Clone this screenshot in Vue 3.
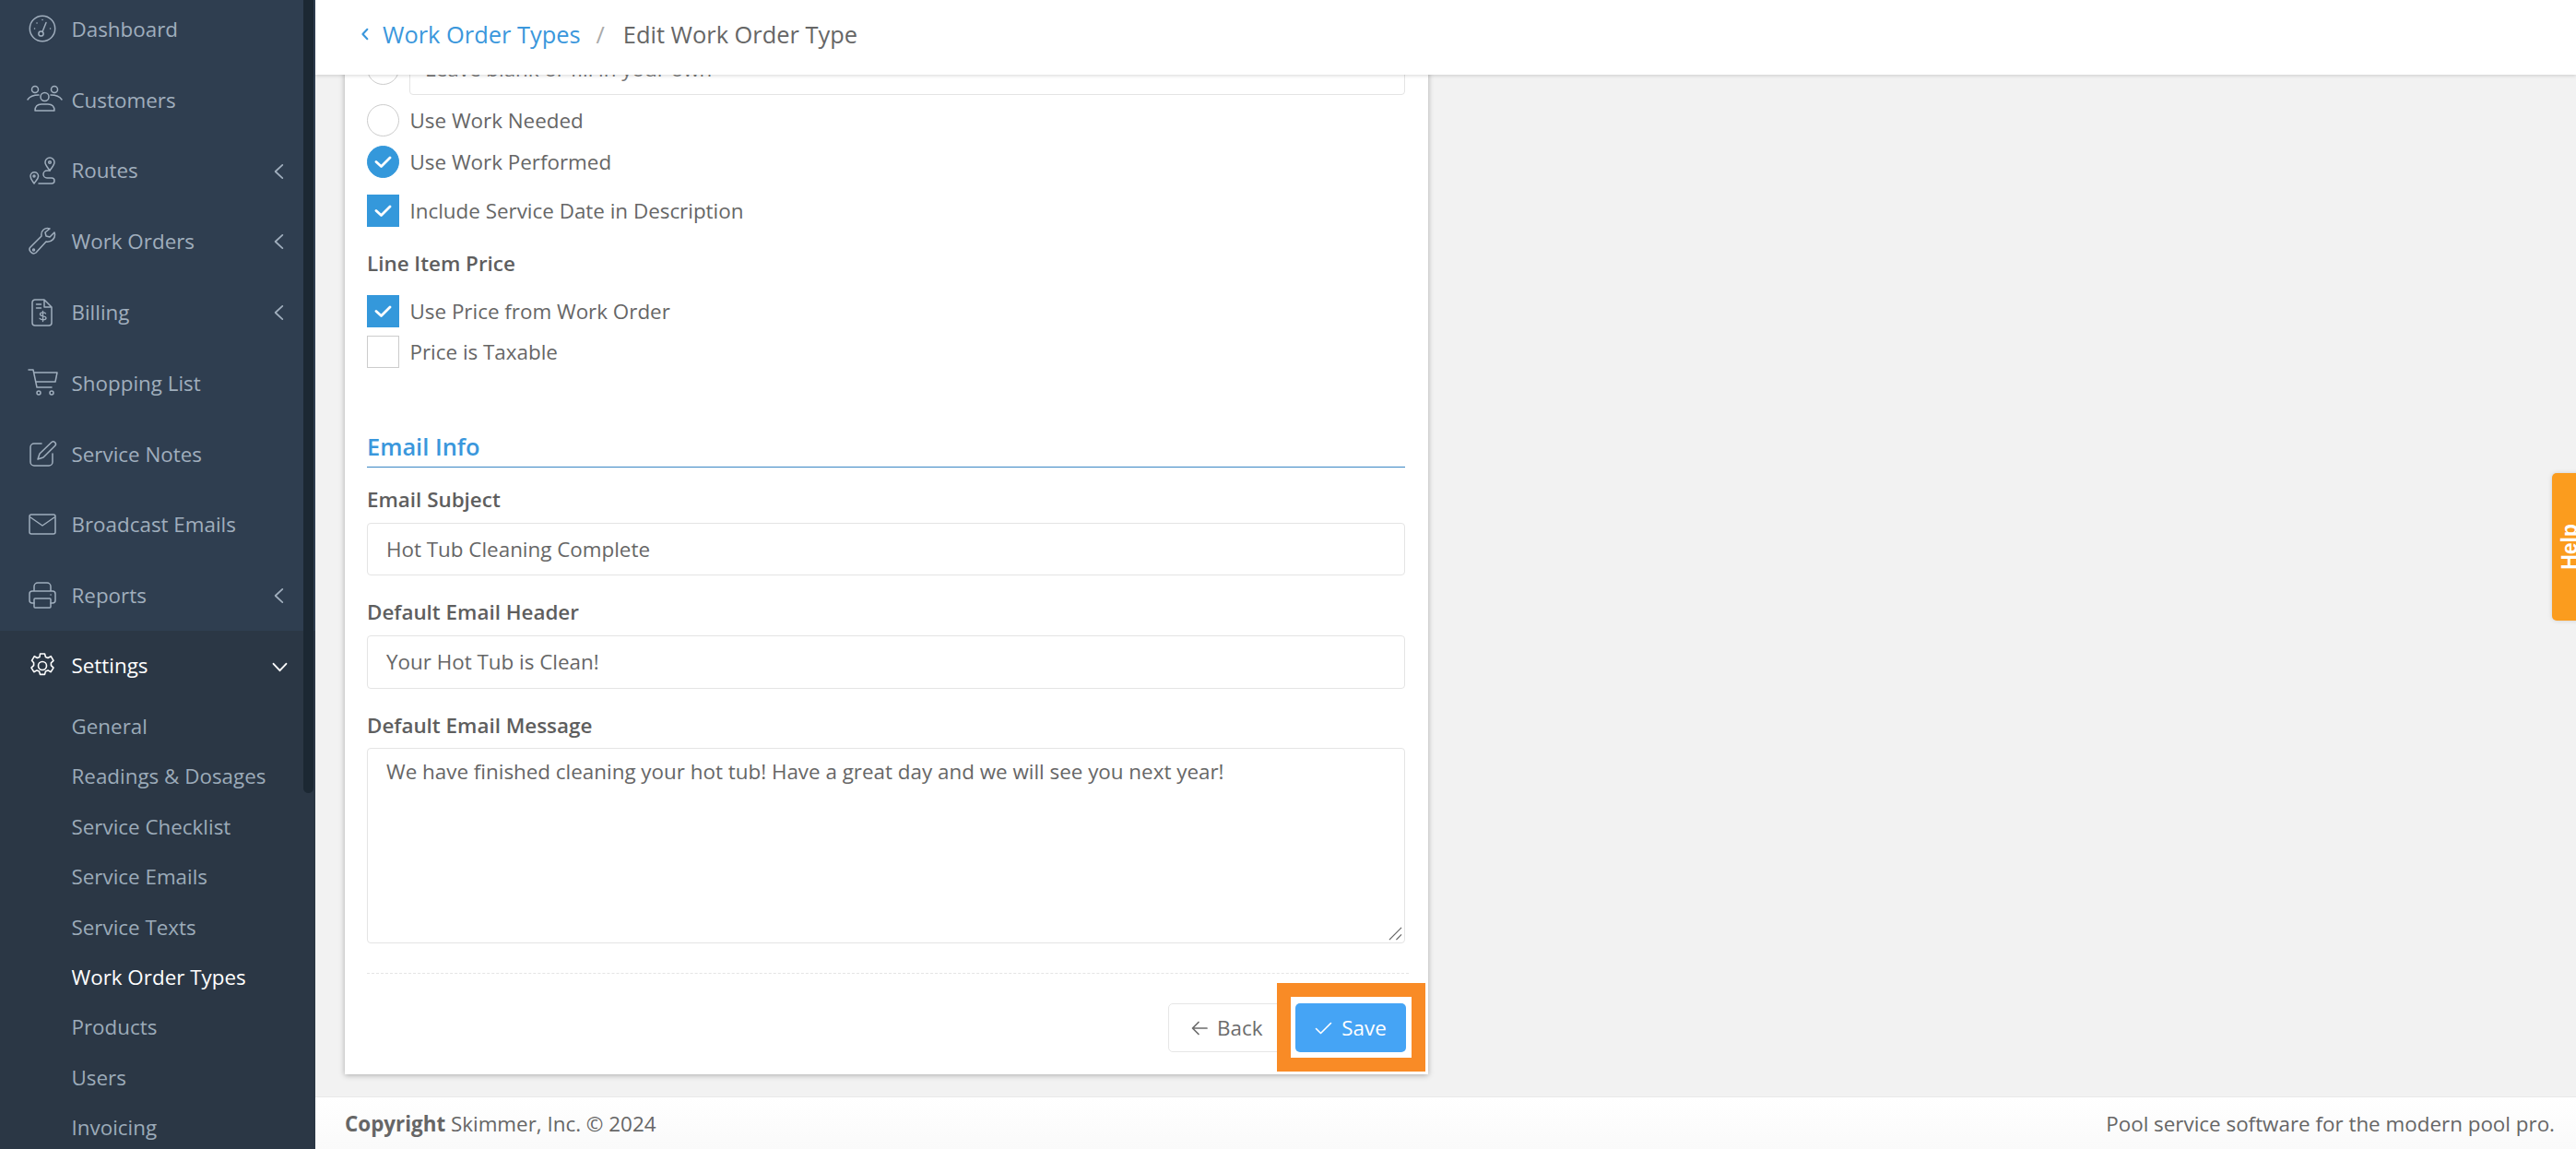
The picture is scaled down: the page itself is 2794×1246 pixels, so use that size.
<script setup>
const top = [
  { n: 'Dashboard', i: 'dash' }, { n: 'Customers', i: 'cust' }, { n: 'Routes', i: 'route', c: 1 },
  { n: 'Work Orders', i: 'wrench', c: 1 }, { n: 'Billing', i: 'bill', c: 1 }, { n: 'Shopping List', i: 'cart' },
  { n: 'Service Notes', i: 'note' }, { n: 'Broadcast Emails', i: 'mail' }, { n: 'Reports', i: 'print', c: 1 },
]
const sub = ['General', 'Readings & Dosages', 'Service Checklist', 'Service Emails', 'Service Texts', 'Work Order Types', 'Products', 'Users', 'Invoicing']
</script>

<template>
  <div class="app">
    <aside class="side">
      <div class="side-scroll">
        <div v-for="t in top" :key="t.n" class="nav">
          <svg class="ic" viewBox="0 0 30 30" fill="none" stroke="currentColor" stroke-width="1.5" stroke-linecap="round" stroke-linejoin="round">
            <template v-if="t.i === 'dash'">
              <circle cx="15" cy="15" r="13.7" /><circle cx="13.5" cy="20.5" r="2.6" /><path d="M15 18.5 19 8.5M6.5 15h.1M9 9h.1M15 5.5h.1M23.5 15h.1" />
            </template>
            <template v-else-if="t.i === 'cust'">
              <circle cx="7" cy="4" r="3.5" /><circle cx="28" cy="4" r="3.5" /><circle cx="17.5" cy="12" r="4.5" /><path d="M-1 15c2-3 6-5 12-5M36 15c-2-3-6-5-12-5M7 27c0-5 3-7 7-7h7c4 0 7 2 7 7z" />
            </template>
            <template v-else-if="t.i === 'route'">
              <path d="M23 15c-2-3-5-6-5-9a5 5 0 0 1 10 0c0 3-3 6-5 9z" /><circle cx="23" cy="6" r="1.3" /><path d="M6 29c-2-3-4-5-4-8a4.3 4.3 0 0 1 8.6 0c0 3-2.6 5-4.6 8z" /><circle cx="6" cy="21" r="1" /><path d="M23 15h-3a4 4 0 0 0 0 8h5a3 3 0 0 1 0 6H11" />
            </template>
            <template v-else-if="t.i === 'wrench'">
              <path d="M28 5l-5 5-4-1-1-4 5-4c-5-2-10 2-9 8L2 21c-3 3 2 9 6 6l11-12c6 1 11-4 9-10z" /><circle cx="5.5" cy="24" r="1" />
            </template>
            <template v-else-if="t.i === 'bill'">
              <path d="M7 1h10l8 8v17a3 3 0 0 1-3 3H7a3 3 0 0 1-3-3V4a3 3 0 0 1 3-3zM17 1v8h8M8.5 6h5M8.5 10h5" /><path d="M18.5 16c-1-1.5-6-1.500-6 .8 0 3 6.500 1 6.500 4.200 0 2.300-6 2.300-7 .3M15.500 13.500v11" stroke-width="1.3" />
            </template>
            <template v-else-if="t.i === 'cart'">
              <path d="M0 1h5l4 19h16M5.5 4H31l-2 10H8" /><circle cx="11" cy="26" r="2" /><circle cx="25" cy="26" r="2" />
            </template>
            <template v-else-if="t.i === 'note'">
              <path d="M14 4H6a4 4 0 0 0-4 4v16a4 4 0 0 0 4 4h16a4 4 0 0 0 4-4v-9" /><path d="M25 2.5a2.7 2.7 0 0 1 3.800 3.800L16 19l-6 2 2-6z" />
            </template>
            <template v-else-if="t.i === 'mail'">
              <rect x="1" y="4" width="28" height="21" rx="2" /><path d="M2 7l13 9 13-9" />
            </template>
            <template v-else-if="t.i === 'print'">
              <path d="M6 10V5a4 4 0 0 1 4-4h10a4 4 0 0 1 4 4v5M6 23H4a3 3 0 0 1-3-3v-7a3 3 0 0 1 3-3h22a3 3 0 0 1 3 3v7a3 3 0 0 1-3 3h-2" /><rect x="6" y="18" width="18" height="10" rx="1" /><path d="M24 14h.1" />
            </template>
          </svg>
          <span class="nav-label">{{ t.n }}</span>
          <svg v-if="t.c" class="chev" viewBox="0 0 10 16" fill="none" stroke="currentColor" stroke-width="1.6" stroke-linecap="round" stroke-linejoin="round"><path d="M8.5 1.5 1.5 8l7 6.5" /></svg>
        </div>
        <div class="group">
          <div class="nav active">
            <svg class="ic" viewBox="0 0 30 30" fill="none" stroke="currentColor" stroke-width="1.6" stroke-linejoin="round">
              <circle cx="15" cy="15" r="4.5" />
              <path d="M12.5 2h5l1 3.500 2.500 1 3.200-1.800 2.800 4.600-2.600 2.500v2.800l2.600 2.500-2.800 4.600-3.200-1.800-2.500 1-1 3.500h-5l-1-3.500-2.500-1-3.200 1.800-2.800-4.600 2.600-2.500v-2.800L3.500 9.300l2.800-4.600 3.200 1.800 2.500-1z" />
            </svg>
            <span class="nav-label">Settings</span>
            <svg class="chev-down" viewBox="0 0 16 10" fill="none" stroke="currentColor" stroke-width="1.8" stroke-linecap="round" stroke-linejoin="round"><path d="M1.5 1.5 8 8.5l6.500-7" /></svg>
          </div>
          <div class="subs">
            <div v-for="s in sub" :key="s" class="sub" :class="{ on: s === 'Work Order Types' }">{{ s }}</div>
          </div>
        </div>
      </div>
      <div class="thumb"></div>
    </aside>

    <div class="main">
      <header class="head">
        <svg class="back-chev" viewBox="0 0 8 12" fill="none" stroke="currentColor" stroke-width="1.8" stroke-linecap="round" stroke-linejoin="round"><path d="M6 1.500 1.800 6 6 10.500" /></svg>
        <span class="crumb">Work Order Types</span>
        <span class="slash">/</span>
        <span class="cur">Edit Work Order Type</span>
      </header>

      <div class="body">
        <section class="card">
          <div class="top-row">
            <span class="radio"></span>
            <div class="fake-input">Leave blank or fill in your own</div>
          </div>
          <div class="row r1"><span class="radio"></span><span>Use Work Needed</span></div>
          <div class="row r2">
            <span class="radio checked"><svg viewBox="0 0 19 13" fill="none" stroke="#fff" stroke-width="2.8" stroke-linecap="round" stroke-linejoin="round"><path d="M2 6.5l5.500 5L17 2" /></svg></span>
            <span>Use Work Performed</span>
          </div>
          <div class="row r3">
            <span class="box checked"><svg viewBox="0 0 19 13" fill="none" stroke="#fff" stroke-width="2.8" stroke-linecap="round" stroke-linejoin="round"><path d="M2 6.5l5.500 5L17 2" /></svg></span>
            <span>Include Service Date in Description</span>
          </div>
          <div class="label price-label">Line Item Price</div>
          <div class="row r4">
            <span class="box checked"><svg viewBox="0 0 19 13" fill="none" stroke="#fff" stroke-width="2.8" stroke-linecap="round" stroke-linejoin="round"><path d="M2 6.5l5.500 5L17 2" /></svg></span>
            <span>Use Price from Work Order</span>
          </div>
          <div class="row r5"><span class="box"></span><span>Price is Taxable</span></div>

          <h3 class="section">Email Info</h3>
          <div class="label l1">Email Subject</div>
          <div class="input">Hot Tub Cleaning Complete</div>
          <div class="label l2">Default Email Header</div>
          <div class="input tall">Your Hot Tub is Clean!</div>
          <div class="label l2">Default Email Message</div>
          <div class="textarea">
            We have finished cleaning your hot tub! Have a great day and we will see you next year!
            <svg class="grip" viewBox="0 0 16 16" fill="none" stroke="#666" stroke-width="1.3"><path d="M1 15 15 1M9 15l6-6" /></svg>
          </div>
          <div class="divider"></div>
          <div class="actions">
            <button class="btn back">
              <svg viewBox="0 0 18 16" fill="none" stroke="#6c6c6c" stroke-width="1.7" stroke-linecap="round" stroke-linejoin="round"><path d="M17 8H2M8 1.500 1.500 8 8 14.500" /></svg>
              Back
            </button>
            <div class="hl">
              <button class="btn save">
                <svg viewBox="0 0 19 14" fill="none" stroke="#fff" stroke-width="1.6" stroke-linecap="round" stroke-linejoin="round"><path d="M1.500 7.500 6.500 12.500 17.500 1.500" /></svg>
                Save
              </button>
            </div>
          </div>
        </section>
      </div>

      <footer class="foot">
        <span><b>Copyright</b> Skimmer, Inc. © 2024</span>
        <span>Pool service software for the modern pool pro.</span>
      </footer>

      <div class="help"><span>Help</span></div>
    </div>
  </div>
</template>

<style>
html, body { margin: 0; overflow: hidden; background: #f2f2f2; }
</style>
<style scoped>
.app { display: flex; width: 2794px; height: 1246px; overflow: hidden; font-family: "Open Sans", sans-serif; font-size: 22.4px; color: #666; }
.side { position: relative; width: 342px; flex: none; background: #2f3e50; overflow: hidden; }
.side-scroll { margin-top: -7px; }
.nav { display: flex; align-items: center; height: 76.8px; padding-left: 31px; color: #a0aebd; position: relative; box-sizing: border-box; }
.ic { width: 30px; height: 30px; flex: none; margin-right: 16.5px; overflow: visible; }
.nav-label { white-space: nowrap; }
.chev { position: absolute; left: 297px; top: 30px; width: 11px; height: 18px; }
.group { background: #2b3745; }
.active { color: #fff; padding-bottom: 2px; }
.chev-down { position: absolute; left: 295px; top: 34px; width: 17px; height: 11px; }
.sub { height: 54.4px; line-height: 54.4px; padding-left: 77.5px; color: #9cabb9; white-space: nowrap; }
.sub.on { color: #fff; }
.thumb { position: absolute; top: 0; right: 2px; width: 11px; height: 860px; border-radius: 0 0 6px 6px; background: #1c2833; }
.main { position: relative; flex: 1; display: flex; flex-direction: column; min-width: 0; }
.head { height: 81px; flex: none; display: flex; align-items: center; padding: 0 0 7px 49px; box-sizing: border-box; background: #fff; box-shadow: 0 1px 4px rgba(0, 0, 0, .16); position: relative; z-index: 2; font-size: 25.4px; }
.back-chev { width: 10px; height: 14px; color: #3a97dc; margin-right: 14px; }
.crumb { color: #3a97dc; }
.slash { color: #aaa; margin: 0 20px 0 17px; }
.cur { color: #666; }
.body { flex: 1; min-height: 0; overflow: hidden; padding-left: 32px; }
.card { width: 1175px; box-sizing: border-box; margin-top: -35px; background: #fff; padding: 0 25px 3px 24px; box-shadow: 0 1px 6px rgba(0, 0, 0, .3); }
.row { display: flex; align-items: center; gap: 11.5px; height: 35px; }
.top-row { display: flex; gap: 11px; height: 57px; }
.fake-input { flex: 1; height: 57px; line-height: 55px; border: 1px solid #e4e4e4; border-radius: 4px; padding-left: 16px; box-sizing: border-box; color: #777; }
.top-row .radio { margin-top: 11px; }
.radio, .box { width: 35px; height: 35px; flex: none; border: 1px solid #ccc; box-sizing: border-box; display: flex; align-items: center; justify-content: center; }
.radio { border-radius: 50%; }
.checked { background: #3498db; border-color: #3498db; }
.checked svg { width: 19px; height: 13px; }
.r1 { margin-top: 10px; }
.r2 { margin-top: 10px; }
.r3 { margin-top: 18px; }
.label { font-weight: 600; color: #5e5e5e; line-height: 34px; }
.price-label { margin-top: 23px; }
.r4 { margin-top: 17px; }
.r5 { margin-top: 9px; }
.section { margin: 66px 0 0; height: 41px; font-size: 25.4px; line-height: 38px; font-weight: 600; color: #3a97dc; border-bottom: 1px solid #3a87c4; }
.l1 { margin-top: 18px; }
.l2 { margin-top: 23px; }
.input { height: 57px; line-height: 55px; margin-top: 8px; border: 1px solid #e4e4e4; border-radius: 4px; box-sizing: border-box; padding-left: 20px; color: #666; }
.input.tall { height: 58px; line-height: 56px; }
.textarea { position: relative; height: 212px; margin-top: 7px; border: 1px solid #e4e4e4; border-radius: 4px; box-sizing: border-box; padding: 9px 20px; line-height: 32px; color: #666; }
.grip { position: absolute; right: 2px; bottom: 2px; width: 15px; height: 15px; }
.divider { margin-top: 32px; margin-right: -4px; border-top: 1px dashed #e4e4e4; }
.actions { display: flex; justify-content: flex-end; align-items: flex-start; margin-top: 10px; margin-right: -22px; }
.btn { display: flex; align-items: center; font: inherit; height: 53px; box-sizing: border-box; border-radius: 5px; cursor: pointer; }
.back { width: 130px; margin-top: 22px; padding: 0 0 0 24px; gap: 10px; background: #fff; border: 1px solid #e6e6e6; color: #6c6c6c; margin-right: -12px; }
.back svg { width: 18px; height: 16px; }
.hl { position: relative; box-sizing: border-box; border: 15px solid #f98b26; width: 161px; height: 96px; padding: 7px 5px; background: #fff; }
.save { width: 120px; justify-content: center; gap: 10px; background: #45a4f5; border: 0; color: #fff; padding: 0; }
.save svg { width: 19px; height: 14px; }
.foot { height: 57px; flex: none; display: flex; align-items: center; justify-content: space-between; padding: 0 23px 0 32px; background: linear-gradient(#fff, #fafafa); border-top: 1px solid #e8e8e8; box-sizing: border-box; }
.foot b { font-weight: 700; }
.help { position: absolute; z-index: 3; right: -6px; top: 513px; width: 32px; height: 160px; box-sizing: border-box; background: #fb9c1e; border-radius: 5px 0 0 5px; box-shadow: 0 0 5px rgba(0, 0, 0, .15); display: flex; align-items: center; }
.help span { writing-mode: vertical-rl; transform: rotate(180deg); font-family: "Liberation Sans", Arial, sans-serif; font-weight: 700; font-size: 23px; color: #fff; margin-left: 6px; }
</style>
